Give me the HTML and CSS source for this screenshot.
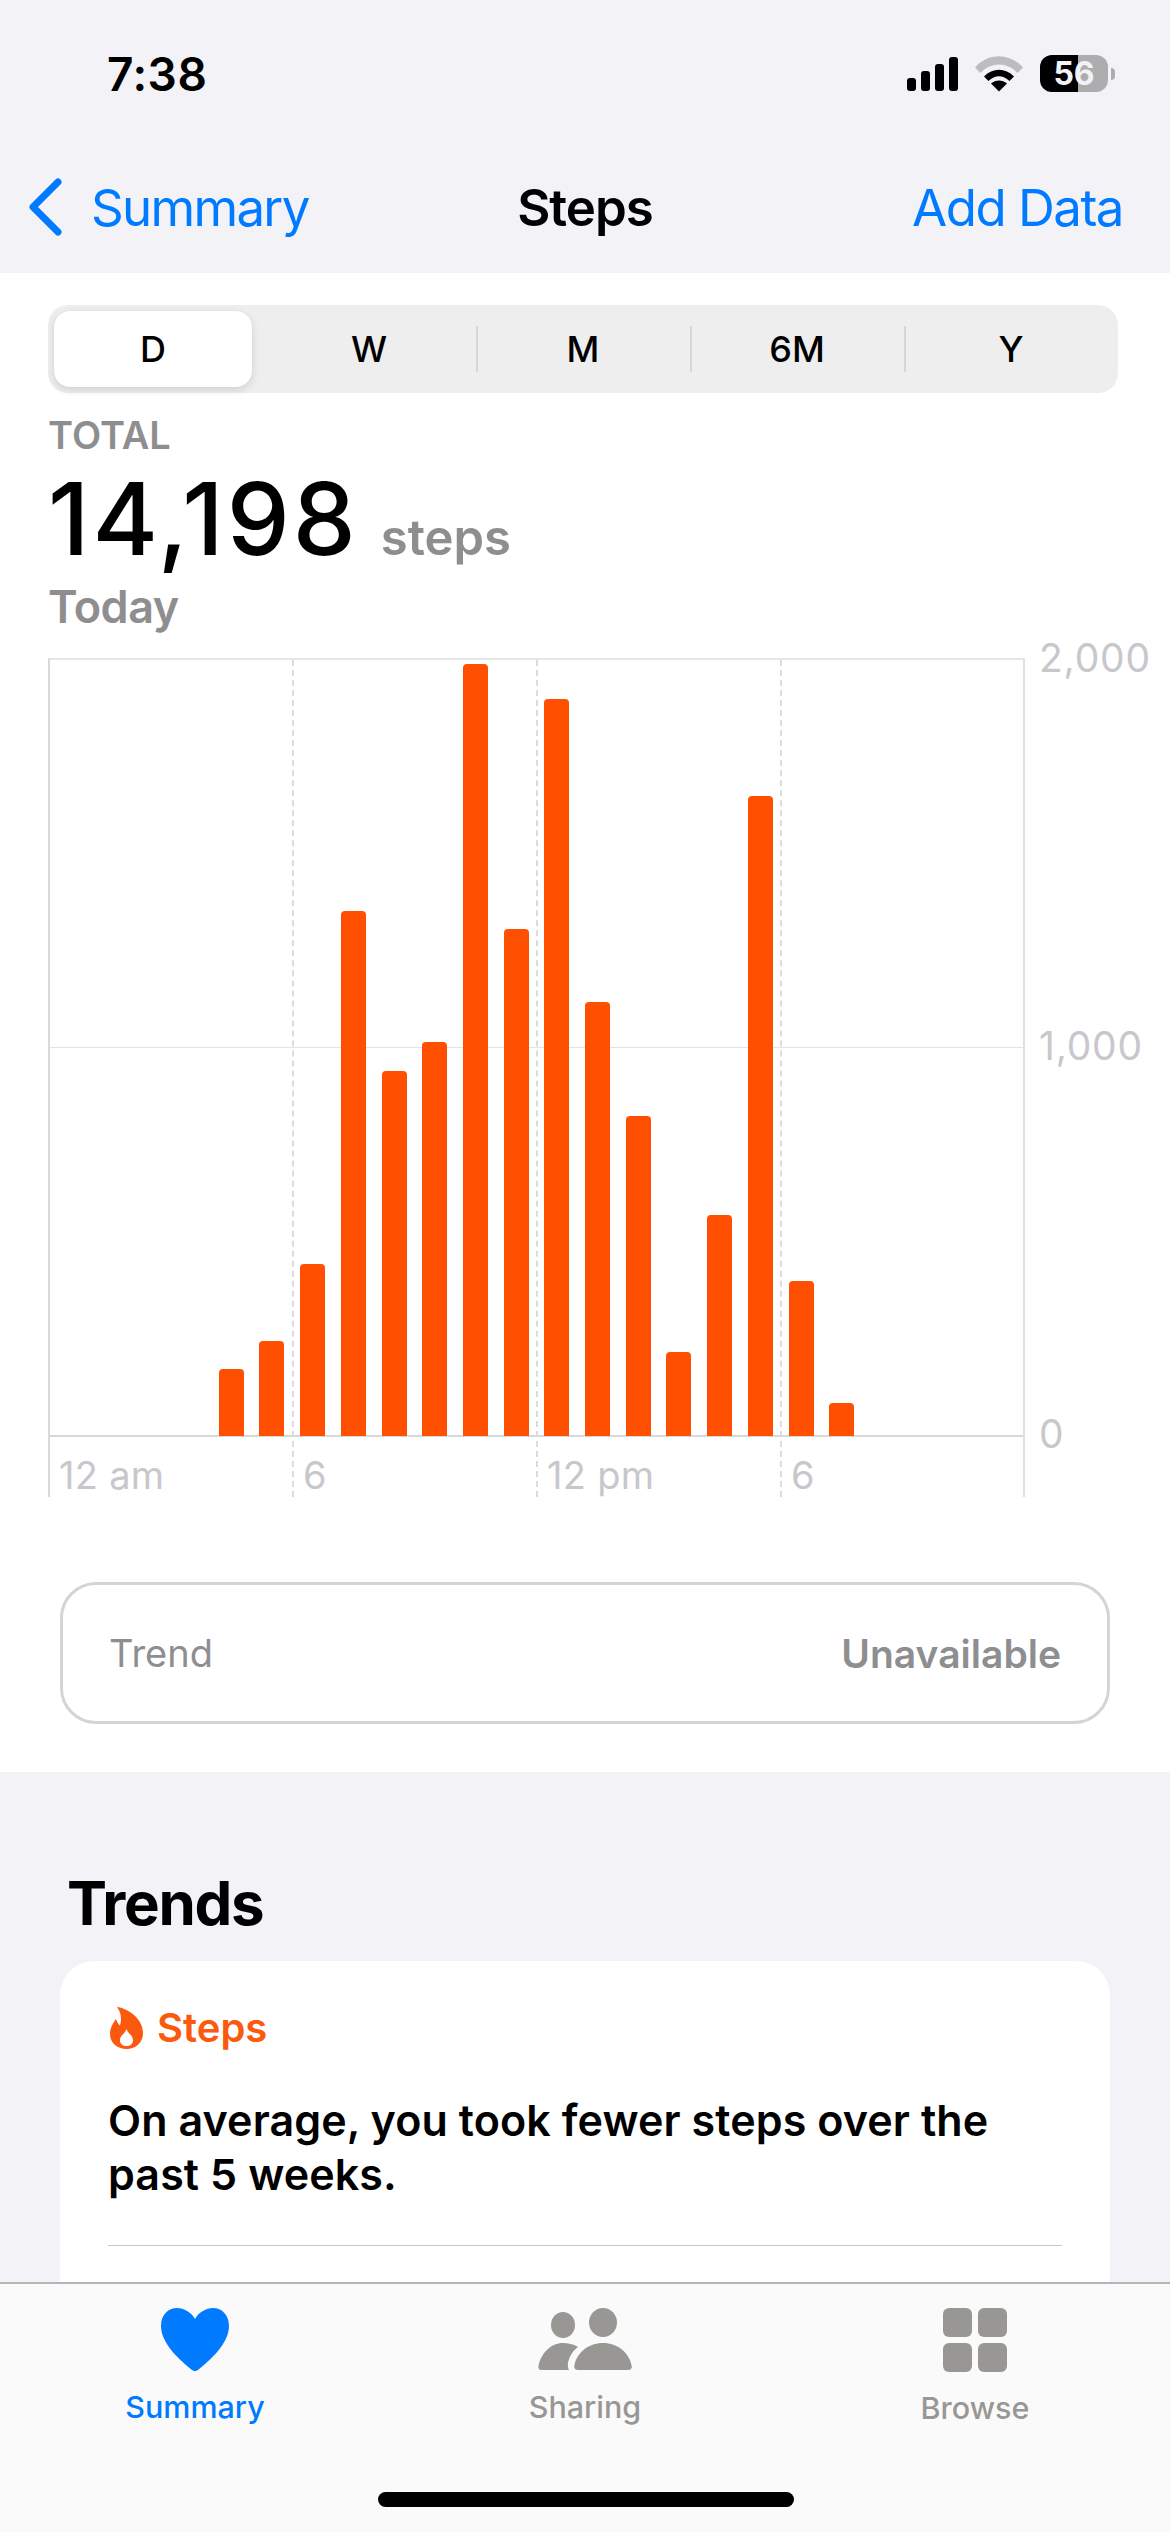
FILE: index.html
```html
<!DOCTYPE html>
<html lang="en">
<head>
    <meta charset="UTF-8">
    <meta name="viewport" content="width=device-width, initial-scale=1.0">
    <title>Steps</title>
    <link rel="stylesheet" href="styles.css">
</head>
<body>
    <div class="phone">
        <header class="top">
            <div class="status">
                <span class="time">7:38</span>
                <div class="status-icons">
                    <div class="signal">
                        <i class="s1"></i><i class="s2"></i><i class="s3"></i><i class="s4"></i>
                    </div>
                    <svg class="wifi" width="48" height="36" viewBox="0 0 48 36">
                        <path d="M0 11.5 C13 -3.5 35 -3.5 48 11.5 L42.5 17 C32 5.5 16 5.5 5.5 17 Z" fill="#bdbdc1"/>
                        <path d="M9 20.5 C17.5 11.5 30.5 11.5 39 20.5 L34.5 25 C28 18.5 20 18.5 13.5 25 Z" fill="#000"/>
                        <path d="M24 35.5 L16 27.5 C20.5 23.5 27.5 23.5 32 27.5 Z" fill="#000"/>
                    </svg>
                    <div class="battery">
                        <div class="battery-body"><span>56</span></div>
                        <div class="battery-nub"></div>
                    </div>
                </div>
            </div>
            <nav class="navbar">
                <a class="back">
                    <svg width="34" height="58" viewBox="0 0 34 58">
                        <path d="M30 4 L5 29 L30 54" fill="none" stroke="#007aff" stroke-width="7" stroke-linecap="round" stroke-linejoin="round"/>
                    </svg>
                    <span>Summary</span>
                </a>
                <h1 class="nav-title">Steps</h1>
                <a class="nav-action">Add Data</a>
            </nav>
        </header>

        <section class="panel">
            <div class="segments">
                <div class="seg seg-on"><span>D</span></div>
                <div class="seg">W</div>
                <div class="seg seg-line">M</div>
                <div class="seg seg-line">6M</div>
                <div class="seg seg-line">Y</div>
            </div>

            <div class="total-label">TOTAL</div>
            <div class="total">
                <span class="total-num">14,198</span>
                <span class="total-unit">steps</span>
            </div>
            <div class="total-date">Today</div>

            <div class="chart">
                <div class="plot">
                    <div class="quarter"><span>12 am</span></div>
                    <div class="quarter"><span>6</span></div>
                    <div class="quarter"><span>12 pm</span></div>
                    <div class="quarter quarter-last"><span>6</span></div>
                    <div class="midline"></div>
                    <div class="baseline"></div>
                    <div class="bars">
                        <div class="bar hour4" style="height:67px"></div>
                        <div class="bar" style="height:95px"></div>
                        <div class="bar" style="height:172px"></div>
                        <div class="bar" style="height:525px"></div>
                        <div class="bar" style="height:365px"></div>
                        <div class="bar" style="height:394px"></div>
                        <div class="bar" style="height:772px"></div>
                        <div class="bar" style="height:507px"></div>
                        <div class="bar" style="height:737px"></div>
                        <div class="bar" style="height:434px"></div>
                        <div class="bar" style="height:320px"></div>
                        <div class="bar" style="height:84px"></div>
                        <div class="bar" style="height:221px"></div>
                        <div class="bar" style="height:640px"></div>
                        <div class="bar" style="height:155px"></div>
                        <div class="bar" style="height:33px"></div>
                    </div>
                </div>
                <div class="yaxis">
                    <span>2,000</span>
                    <span>1,000</span>
                    <span>0</span>
                </div>
            </div>

            <div class="trend-box">
                <span>Trend</span>
                <span class="trend-value">Unavailable</span>
            </div>
        </section>

        <section class="trends">
            <h2>Trends</h2>
            <div class="card">
                <div class="card-head">
                    <svg width="33" height="42" viewBox="0 0 33 42">
                        <path fill-rule="evenodd" fill="#fb5a0e" d="M7 0 C17 1 33 11 33 26 C33 35.5 26 42 16.5 42 C7 42 0 35.5 0 27 C0 21 3 16 6 12 C7 15 8 17 10 18.5 C12 12 11 5 7 0 Z M16.5 22 C18 27 23 28 23 33.5 C23 37 20 39 16.5 39 C13 39 10 37 10 33.5 C10 28 15 27 16.5 22 Z"/>
                    </svg>
                    <span>Steps</span>
                </div>
                <p>On average, you took fewer steps over the past 5 weeks.</p>
                <div class="card-rule"></div>
            </div>
        </section>

        <footer class="tabbar">
            <div class="tab tab-on">
                <svg width="68" height="63" viewBox="0 0 68 63">
                    <path fill="#007aff" d="M34 11 C30 4 23 0 16 0 C7 0 0 7 0 18 C0 36 20 53 31 62 C33 63.5 35 63.5 37 62 C48 53 68 36 68 18 C68 7 61 0 52 0 C45 0 38 4 34 11 Z"/>
                </svg>
                <span>Summary</span>
            </div>
            <div class="tab">
                <svg width="94" height="63" viewBox="0 0 94 63">
                    <ellipse cx="25" cy="17" rx="12" ry="13" fill="#999794"/>
                    <ellipse cx="65" cy="14.5" rx="14" ry="14.5" fill="#999794"/>
                    <path fill="#999794" d="M40 62 C37 62 35.5 60 36.5 57 C39 45 50 35 65 35 C80 35 91 45 93.5 57 C94.5 60 93 62 90 62 Z"/>
                    <path fill="#999794" d="M3 62 C1 62 0 60 .5 58 C3 45 13 35 25 35 C30 35 35 36 40 39 C34 43 31 50 30 55 C29.5 58 30 60 31 62 Z"/>
                </svg>
                <span>Sharing</span>
            </div>
            <div class="tab">
                <div class="tiles">
                    <i></i><i></i><i></i><i></i>
                </div>
                <span>Browse</span>
            </div>
            <div class="home-bar"></div>
        </footer>
    </div>
</body>
</html>
```

FILE: styles.css
```css
* {
    box-sizing: border-box;
    margin: 0;
    padding: 0;
}

body {
    font-family: Inter, "Liberation Sans", sans-serif;
    background-color: #f2f2f7;
    color: #000;
}

.phone {
    position: relative;
    width: 1170px;
    height: 2532px;
    overflow: hidden;
    background-color: #f2f2f7;
}

/* status bar + nav */
.top {
    height: 273px;
}

.status {
    display: flex;
    justify-content: space-between;
    align-items: center;
    height: 147px;
    padding: 0 55px 0 107px;
}

.time {
    font-size: 46px;
    font-weight: 600;
    letter-spacing: 0.5px;
}

.status-icons {
    display: flex;
    align-items: center;
}

.signal {
    display: flex;
    align-items: flex-end;
    gap: 5px;
    height: 34px;
    margin-right: 17px;
}

.signal i {
    display: block;
    width: 9px;
    border-radius: 3px;
    background-color: #000;
}

.s1 { height: 13px; }
.s2 { height: 20px; }
.s3 { height: 27px; }
.s4 { height: 34px; }

.wifi {
    margin-right: 17px;
}

.battery {
    display: flex;
    align-items: center;
    gap: 3px;
}

.battery-body {
    display: flex;
    justify-content: center;
    align-items: center;
    width: 68px;
    height: 37px;
    border-radius: 12px;
    background: linear-gradient(to right, #000 56%, #adadaf 56%);
    color: #f2f2f7;
    font-size: 32px;
    font-weight: 700;
}

.battery-nub {
    width: 4px;
    height: 12px;
    border-radius: 0 4px 4px 0;
    background-color: #adadaf;
}

.navbar {
    display: flex;
    justify-content: space-between;
    align-items: center;
    height: 66px;
    margin-top: 27px;
    padding: 0 47px 0 28px;
    font-size: 51px;
    color: #007aff;
}

.back {
    display: flex;
    align-items: center;
    gap: 29px;
    width: 300px;
    letter-spacing: -1.7px;
}

.back svg {
    flex-shrink: 0;
}

.nav-title {
    font-size: 51px;
    font-weight: 600;
    letter-spacing: -1px;
    color: #000;
}

.nav-action {
    width: 281px;
    text-align: right;
    white-space: nowrap;
    letter-spacing: -1.5px;
}

/* white panel */
.panel {
    height: 1499px;
    padding: 32px 0 0 48px;
    background-color: #fff;
}

.segments {
    display: flex;
    width: 1070px;
    height: 88px;
    border-radius: 20px;
    background-color: #eeeeef;
}

.seg {
    display: flex;
    flex: 0 0 214px;
    justify-content: center;
    align-items: center;
    font-size: 36px;
    font-weight: 500;
}

.seg-on {
    padding: 6px 10px 6px 6px;
}

.seg-on span {
    display: flex;
    flex: 1;
    justify-content: center;
    align-items: center;
    height: 100%;
    border-radius: 16px;
    background-color: #fff;
    box-shadow: 0 3px 8px rgba(0,0,0,0.12), 0 0 2px rgba(0,0,0,0.06);
}

.seg-line {
    background: linear-gradient(#d6d6d8, #d6d6d8) left center / 2px 46px no-repeat;
}

.total-label {
    margin-top: 20px;
    font-size: 38px;
    line-height: 44px;
    font-weight: 600;
    color: #8e8e90;
}

.total {
    display: flex;
    align-items: baseline;
    gap: 22px;
    height: 115px;
    margin-top: 6px;
}

.total-num {
    font-size: 100px;
    line-height: 112px;
    font-weight: 500;
    letter-spacing: 3px;
}

.total-unit {
    font-size: 49px;
    font-weight: 600;
    color: #8e8e90;
}

.total-date {
    margin-top: 2px;
    font-size: 45px;
    line-height: 54px;
    font-weight: 600;
    letter-spacing: -0.5px;
    color: #8e8e90;
}

/* chart */
.chart {
    display: flex;
    margin-top: 24px;
}

.plot {
    position: relative;
    display: flex;
    width: 977px;
    height: 839px;
    border-top: 2px solid #e6e6e6;
    border-left: 2px solid #d9d9d9;
    border-right: 2px solid #e0e0e0;
}

.quarter {
    display: flex;
    flex: 0 0 244px;
    align-items: flex-end;
    padding: 0 0 0 9px;
    border-right: 2px dashed #dcdcdc;
    font-size: 38px;
    line-height: 44px;
    letter-spacing: 0.3px;
    color: #c7c7cc;
}

.quarter-last {
    flex: 1;
    border-right: none;
}

.midline {
    position: absolute;
    top: 387px;
    left: 0;
    right: 0;
    height: 1px;
    background-color: #e4e4e4;
}

.baseline {
    position: absolute;
    top: 775px;
    left: 0;
    right: 0;
    height: 2px;
    background-color: #d8d8d8;
}

.bars {
    position: absolute;
    top: 0;
    left: -2px;
    right: -2px;
    display: grid;
    grid-template-columns: repeat(24, 1fr);
    align-items: end;
    height: 776px;
}

.bar {
    width: 25px;
    justify-self: center;
    border-radius: 4px 4px 0 0;
    background-color: #ff4f00;
}

.hour4 {
    grid-column-start: 5;
}

.yaxis {
    display: flex;
    flex-direction: column;
    justify-content: space-between;
    height: 816px;
    margin-top: -20px;
    padding-left: 14px;
    font-size: 39px;
    line-height: 40px;
    letter-spacing: 0.8px;
    color: #c7c7cc;
}

.trend-box {
    display: flex;
    justify-content: space-between;
    align-items: center;
    width: 1050px;
    height: 142px;
    margin: 85px 0 0 12px;
    padding: 0 46px;
    border: 3px solid #d4d4d6;
    border-radius: 36px;
    font-size: 38px;
    color: #8e8e90;
}

.trend-value {
    font-size: 39px;
    font-weight: 600;
}

/* trends */
.trends {
    padding: 0 60px;
}

.trends h2 {
    margin: 96px 0 0 7px;
    font-size: 60px;
    line-height: 70px;
    font-weight: 700;
    letter-spacing: -1.3px;
}

.card {
    height: 500px;
    margin-top: 23px;
    padding: 42px 48px 0;
    border-radius: 34px;
    background-color: #fff;
}

.card-head {
    display: flex;
    align-items: center;
    gap: 14px;
    padding-left: 2px;
    font-size: 40px;
    font-weight: 600;
    color: #fb5a0e;
}

.card p {
    margin-top: 41px;
    font-size: 43px;
    line-height: 54px;
    font-weight: 600;
    letter-spacing: 0.1px;
}

.card-rule {
    height: 1px;
    margin-top: 44px;
    background-color: #c8c8ca;
}

/* tab bar */
.tabbar {
    position: absolute;
    left: 0;
    right: 0;
    bottom: 0;
    display: flex;
    height: 250px;
    border-top: 2px solid #b5b5b5;
    background-color: #fafafa;
}

.tab {
    display: flex;
    flex: 1;
    flex-direction: column;
    align-items: center;
    padding-top: 24px;
    font-size: 30.5px;
    font-weight: 500;
    color: #999794;
}

.tab span {
    margin-top: 17px;
}

.tab-on {
    color: #007aff;
}

.tiles {
    display: grid;
    grid-template-columns: 29px 29px;
    grid-auto-rows: 29px;
    gap: 6px;
}

.tiles i {
    display: block;
    border-radius: 6px;
    background-color: #999794;
}

.home-bar {
    position: absolute;
    left: 378px;
    bottom: 25px;
    width: 416px;
    height: 15px;
    border-radius: 8px;
    background-color: #000;
}
```
